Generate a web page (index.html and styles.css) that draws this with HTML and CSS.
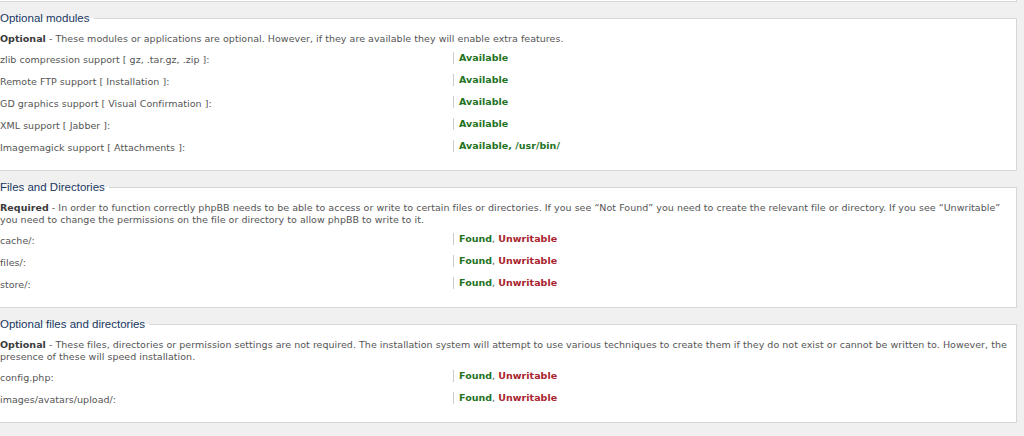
FILE: index.html
```html
<!DOCTYPE html>
<html lang="en">
<head>
  <meta charset="UTF-8">
  <title>Install - Requirements</title>
  <link rel="stylesheet" href="styles.css">
</head>
<body>
<div class="panel">
  <div class="panel-prev"></div>

  <fieldset>
    <legend>Optional modules</legend>
    <p class="explain"><strong>Optional</strong> - These modules or applications are optional. However, if they are available they will enable extra features.</p>
    <dl>
      <dt>zlib compression support [ gz, .tar.gz, .zip ]:</dt>
      <dd><strong class="ok">Available</strong></dd>
    </dl>
    <dl>
      <dt>Remote FTP support [ Installation ]:</dt>
      <dd><strong class="ok">Available</strong></dd>
    </dl>
    <dl>
      <dt>GD graphics support [ Visual Confirmation ]:</dt>
      <dd><strong class="ok">Available</strong></dd>
    </dl>
    <dl>
      <dt>XML support [ Jabber ]:</dt>
      <dd><strong class="ok">Available</strong></dd>
    </dl>
    <dl>
      <dt>Imagemagick support [ Attachments ]:</dt>
      <dd><strong class="ok">Available, /usr/bin/</strong></dd>
    </dl>
  </fieldset>

  <fieldset>
    <legend>Files and Directories</legend>
    <p class="explain"><strong>Required</strong> - In order to function correctly phpBB needs to be able to access or write to certain files or directories. If you see “Not Found” you need to create the relevant file or directory. If you see “Unwritable” you need to change the permissions on the file or directory to allow phpBB to write to it.</p>
    <dl>
      <dt>cache/:</dt>
      <dd><strong class="ok">Found</strong>, <strong class="err">Unwritable</strong></dd>
    </dl>
    <dl>
      <dt>files/:</dt>
      <dd><strong class="ok">Found</strong>, <strong class="err">Unwritable</strong></dd>
    </dl>
    <dl>
      <dt>store/:</dt>
      <dd><strong class="ok">Found</strong>, <strong class="err">Unwritable</strong></dd>
    </dl>
  </fieldset>

  <fieldset>
    <legend>Optional files and directories</legend>
    <p class="explain"><strong>Optional</strong> - These files, directories or permission settings are not required. The installation system will attempt to use various techniques to create them if they do not exist or cannot be written to. However, the presence of these will speed installation.</p>
    <dl>
      <dt>config.php:</dt>
      <dd><strong class="ok">Found</strong>, <strong class="err">Unwritable</strong></dd>
    </dl>
    <dl>
      <dt>images/avatars/upload/:</dt>
      <dd><strong class="ok">Found</strong>, <strong class="err">Unwritable</strong></dd>
    </dl>
  </fieldset>
</div>
</body>
</html>
```

FILE: styles.css
```css
body {
  margin: 0;
  background-color: #f0f0f0;
  font-family: "DejaVu Sans", Verdana, sans-serif;
  font-size: 9.5px;
  letter-spacing: 0.03px;
  color: #555;
}
.panel {
  margin: 0 7px 0 -9px;
}
.panel-prev {
  height: 1px;
  background-color: #fff;
  border: 1px solid #d7d7d7;
  border-top: none;
}
fieldset {
  margin: 9px 0 0;
  padding: 0 6px 11px 8px;
  border: 1px solid #d7d7d7;
  background-color: #fff;
}
legend {
  padding: 0 4px 0 0;
  font-family: "Liberation Sans", Arial, sans-serif;
  font-size: 11.5px;
  line-height: 14px;
  letter-spacing: 0;
  color: #183761;
}
.explain {
  margin: 8px 0 4px;
  line-height: 12px;
}
.explain strong {
  color: #3a3a3a;
}
dl {
  display: flex;
  height: 22px;
  margin: 0;
}
dt {
  flex: none;
  width: 453px;
  padding-top: 5px;
  line-height: 12px;
}
dd {
  height: 12px;
  margin: 3px 0 0;
  padding-left: 5px;
  border-left: 1px solid #ccc;
  line-height: 12px;
}
.ok {
  color: #1f731f;
}
.err {
  color: #a8242e;
}
```
